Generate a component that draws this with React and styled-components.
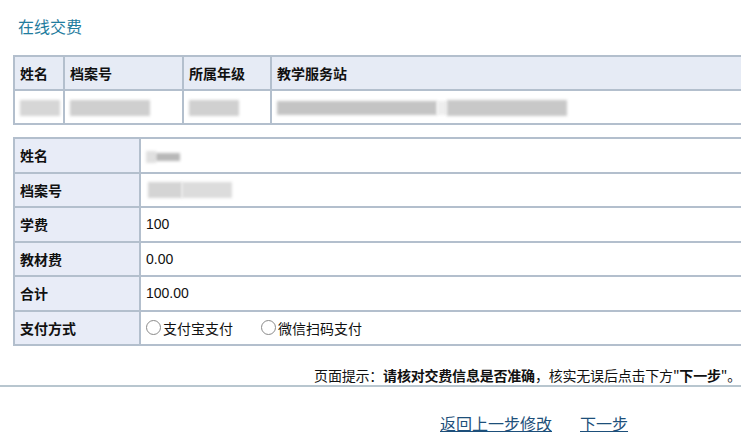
import styled, { createGlobalStyle } from "styled-components";

const GlobalStyle = createGlobalStyle`
  html, body {
    margin: 0;
    padding: 0;
    background: #fff;
    overflow: hidden;
  }
  body {
    font-family: "Liberation Sans", Arial, "Noto Sans CJK SC", sans-serif;
    color: #111;
  }
`;

const Page = styled.div`
  width: 741px;
  height: 444px;
  overflow: hidden;
`;

const Title = styled.h2`
  margin: 0;
  padding: 14px 0 0 18px;
  height: 24px;
  line-height: 24px;
  font-size: 16px;
  font-weight: normal;
  color: #1f7c9e;
  font-family: "Noto Sans CJK SC", sans-serif;
`;

const Table = styled.table`
  border-collapse: collapse;
  margin-left: 13px;
  margin-top: ${(p) => p.$top}px;
  width: 760px;
  table-layout: fixed;
  font-size: 14px;
  td, th {
    border: 2px solid #b3bfcd;
    height: ${(p) => p.$rowH}px;
    padding: 0 5px;
    text-align: left;
    vertical-align: middle;
  }
`;

const HeadCell = styled.th`
  background: #e6ebf5;
  font-weight: bold;
  font-family: "Noto Sans CJK SC", sans-serif;
`;

const Label = styled.td`
  background: #e8ecf7;
  font-weight: bold;
  font-family: "Noto Sans CJK SC", sans-serif;
`;

const Value = styled.td`
  background: #fff;
  font-family: "Liberation Sans", Arial, "Noto Sans CJK SC", sans-serif;
`;

const Smear = styled.span`
  display: inline-block;
  vertical-align: middle;
  height: ${(p) => p.$h || 12}px;
  width: ${(p) => p.$w}px;
  margin-left: ${(p) => p.$ml || 0}px;
  background: ${(p) => p.$c || "#c9c9c9"};
  filter: blur(1.5px);
`;

const Options = styled.div`
  display: flex;
  align-items: center;
  gap: 28px;
  font-family: "Noto Sans CJK SC", sans-serif;
  font-size: 14px;
`;

const Option = styled.label`
  display: flex;
  align-items: center;
  gap: 2px;
`;

const Radio = styled.span`
  width: 13px;
  height: 13px;
  border: 1px solid #8a8a8a;
  border-radius: 50%;
  background: #fff;
`;

const Hint = styled.div`
  margin-top: 19px;
  text-align: right;
  white-space: nowrap;
  font-size: 14px;
  letter-spacing: -0.2px;
  line-height: 20px;
  font-family: "Noto Sans CJK SC", sans-serif;
  border-bottom: 2px solid #b8c6cf;
  b { font-weight: bold; }
`;

const Links = styled.div`
  display: flex;
  gap: 28px;
  padding-left: 440px;
  margin-top: 24px;
  font-size: 16px;
  font-family: "Noto Sans CJK SC", sans-serif;
  a {
    color: #1d4f7a;
    text-decoration: underline;
  }
`;

const fields = [
  ["姓名", <><Smear $w={10} $c="#e0e0e0" /><Smear $w={24} $c="#b8b8b8" $h={8} /></>],
  ["档案号", <><Smear $w={34} $c="#d4d4d4" $h={16} $ml={2} /><Smear $w={50} $c="#dcdcdc" $h={16} /></>],
  ["学费", "100"],
  ["教材费", "0.00"],
  ["合计", "100.00"],
];

export default function App() {
  return (
    <Page>
      <GlobalStyle />
      <Title>在线交费</Title>
      <Table $top={17} $rowH={32}>
        <colgroup>
          <col style={{ width: 50 }} />
          <col style={{ width: 119 }} />
          <col style={{ width: 88 }} />
          <col />
        </colgroup>
        <thead>
          <tr>
            <HeadCell>姓名</HeadCell>
            <HeadCell>档案号</HeadCell>
            <HeadCell>所属年级</HeadCell>
            <HeadCell>教学服务站</HeadCell>
          </tr>
        </thead>
        <tbody>
          <tr>
            <Value><Smear $w={40} $h={16} $c="#d6d6d6" /></Value>
            <Value><Smear $w={80} $h={16} $c="#cfcfcf" /></Value>
            <Value><Smear $w={50} $h={16} $c="#d0d0d0" /></Value>
            <Value>
              <Smear $w={160} $h={14} $c="#c4c4c4" />
              <Smear $w={10} $h={14} $c="#eeeeee" />
              <Smear $w={120} $h={16} $c="#c8c8c8" />
            </Value>
          </tr>
        </tbody>
      </Table>
      <Table $top={12} $rowH={32.5}>
        <colgroup>
          <col style={{ width: 126 }} />
          <col />
        </colgroup>
        <tbody>
          {fields.map(([k, v]) => (
            <tr key={k}>
              <Label>{k}</Label>
              <Value>{v}</Value>
            </tr>
          ))}
          <tr>
            <Label>支付方式</Label>
            <Value>
              <Options>
                <Option><Radio />支付宝支付</Option>
                <Option><Radio />微信扫码支付</Option>
              </Options>
            </Value>
          </tr>
        </tbody>
      </Table>
      <Hint>
        页面提示：<b>请核对交费信息是否准确</b>，核实无误后点击下方"<b>下一步</b>"。
      </Hint>
      <Links>
        <a href="#back">返回上一步修改</a>
        <a href="#next">下一步</a>
      </Links>
    </Page>
  );
}
